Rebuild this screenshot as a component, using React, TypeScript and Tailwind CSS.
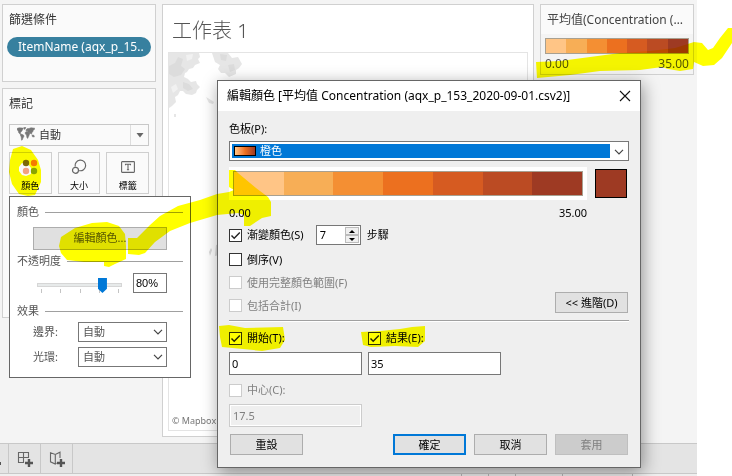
import type { ReactNode } from "react";

const STEPS = [
  "bg-[#ffc586]",
  "bg-[#f7ae56]",
  "bg-[#f48f33]",
  "bg-[#ec701f]",
  "bg-[#d65b21]",
  "bg-[#bb4b23]",
  "bg-[#9e3a23]",
];

function Ramp({ className }: { className: string }) {
  return (
    <div className={`flex border border-[#a8a090] ${className}`}>
      {STEPS.map((s) => (
        <div key={s} className={`flex-1 ${s}`} />
      ))}
    </div>
  );
}

function Chevron({ className }: { className: string }) {
  return (
    <svg viewBox="0 0 10 6" className={`pointer-events-none absolute h-[6px] w-[10px] ${className}`} fill="none" stroke="#444" strokeWidth="1.2">
      <path d="M1 0.8 5 4.8 9 0.8" />
    </svg>
  );
}

function WorldIcon() {
  return (
    <svg viewBox="0 0 18 14" className="pointer-events-none absolute left-2 top-[3px] h-[14px] w-[18px]" fill="#777" stroke="#777" strokeWidth="0.5">
      <path d="M0 1.5 2 .8 5.8 1 6.3 2 5.2 3 5 4 3.8 5 3.2 6.2 4.2 7 6.5 8 7 9.2 6 11 5.2 13 4.5 13.2 4.2 10 3.3 8 3.3 7.2 1.8 6 1.3 4 .2 3z" />
      <path d="M6.7.5 8.8.2 8.2 2 7.3 2.4zM9 3.8 9 2.8 10.4 1.6 12 1.5 14 .7 17.8 1.2 17.4 2.6 16.2 3.2 15.8 4.8 14.8 5.8 14.5 7.3 13.6 6 13 7 12.2 5.8 11.7 5.4 12.6 7 11.6 9.6 10.6 11.5 9.8 10.3 9.5 8 8.3 7 8.3 5.2 9.5 4.6 11 4.8 10.3 3.8z" />
      <path d="M15 8 17 8.3 17.3 10 15.4 9.8z" />
    </svg>
  );
}

function MarkButton({ icon, label }: { icon: ReactNode; label: string }) {
  return (
    <button className="flex h-[42px] flex-1 flex-col items-center border border-[#cfcfcf] bg-[#fafafa] pt-[5px] text-[9px] leading-3 text-black">
      <span className="flex h-[18px] items-center">{icon}</span>
      <span className="mt-1">{label}</span>
    </button>
  );
}

function Sidebar() {
  return (
    <aside className="flex w-[154px] shrink-0 flex-col gap-[6px] text-[#333]">
      <section className="h-[78px] border border-[#d0d0d0] bg-[#fafafa] px-1 pt-[7px]">
        <h2 className="px-[2px] text-[12px] leading-4">篩選條件</h2>
        <button className="mt-[9px] h-5 w-full truncate rounded-full bg-[#37809f] pl-[11px] text-left text-[12px] leading-5 text-white">
          ItemName (aqx_p_15..
        </button>
      </section>
      <section className="h-[230px] border border-[#d0d0d0] bg-[#fafafa] px-[6px] pt-[7px]">
        <h2 className="text-[12px] leading-4">標記</h2>
        <div className="relative mt-3">
          <select aria-label="標記類型" className="block h-[22px] w-full appearance-none border border-[#c8c8c8] bg-[#fafafa] pl-[29px] text-[11px]">
            <option>自動</option>
          </select>
          <WorldIcon />
          <div className="pointer-events-none absolute inset-y-px right-[18px] w-px bg-[#ddd]" />
          <svg viewBox="0 0 8 5" className="pointer-events-none absolute right-[5px] top-[9px] h-[5px] w-[8px]" fill="#666">
            <path d="M0.5 0h7L4 4.5z" />
          </svg>
        </div>
        <div className="mt-[6px] flex gap-[6px]">
          <MarkButton
            label="顏色"
            icon={
              <svg viewBox="0 0 16 16" className="size-4">
                <circle cx="4" cy="4" r="3.2" fill="#7d6a10" />
                <circle cx="12" cy="4" r="3.2" fill="#f57a0a" />
                <circle cx="4" cy="12" r="3.2" fill="#f2a181" />
                <circle cx="12" cy="12" r="3.2" fill="#8aa51e" />
              </svg>
            }
          />
          <MarkButton
            label="大小"
            icon={
              <svg viewBox="0 0 16 16" className="size-4" fill="none" stroke="#666" strokeWidth="1.2">
                <path d="M4.2 7.6A5.3 5.3 0 1 1 8.2 11.6" />
                <circle cx="4.5" cy="11.3" r="3" />
              </svg>
            }
          />
          <MarkButton
            label="標籤"
            icon={
              <svg viewBox="0 0 14 12" className="h-3 w-[14px]" fill="none" stroke="#666" strokeWidth="1.1">
                <rect x=".6" y=".6" width="12.8" height="10.8" rx=".6" />
                <path d="M4.5 4.2V3.2h5v1M7 3.2v5.6M5.9 8.8h2.2" />
              </svg>
            }
          />
        </div>
      </section>
    </aside>
  );
}

function Worksheet() {
  return (
    <section className="flex min-w-0 flex-1 flex-col border border-[#d0d0d0] bg-white p-[5px] pt-[10px]">
      <h1 className="pl-1 text-[20px] font-light leading-8 text-[#555]">工作表 1</h1>
      <div className="mt-[5px] flex flex-1 flex-col justify-between border border-[#e4e4e4]">
        <svg viewBox="0 0 90 210" className="h-[210px] w-[90px]" fill="#e6e6e6">
          <path d="M0 0H30L31 4 29 6 31 10 26 12 24 15 20 16 18 19 16 20 15 24 19 26 22 29 27 28 28 31 31 34 28 37 27 40 23 42 17 41 14 38 11 38 9 42 6 44 7 49 3 53 0 55z" />
          <path d="M43 0H59L63 5 69 4 73 11 70 15 67 17 67 21 60 24 56 20 52 20 49 16 51 12 46 9zM37 44 42 47 45 49 44 51 40 50z" />
          <path d="M5 61h2v3H5z" />
          <path fill="#dcdcdc" d="M0 13 6 10 9 4 14 6 12 13 16 16 12 22 5 24 0 21zM14 29 20 31 24 36 19 38 14 35zM51 1 58 2 57 8 52 7zM59 12 65 11 66 17 61 19z" />
          <path fill="#f1f1f1" d="M17 2 24 1 23 6 18 8zM2 34 7 31 9 36 4 40z" />
          <path fill="#dadada" d="M40 199l2-4 1 2-2 6zM47 192l3-1v4l-2 2 2 5-4 1z" />
        </svg>
        <p className="pb-[3px] pl-[3px] text-[9px] leading-3 text-[#777]">© Mapbox © OSM</p>
      </div>
    </section>
  );
}

function Legend() {
  return (
    <section className="h-[71px] w-[154px] shrink-0 border border-[#d0d0d0] bg-[#f4f4f4] text-[#555]">
      <h2 className="truncate bg-[#fafafa] py-[6px] pl-[6px] pr-1 text-[12px] leading-[17px] text-[#444]">平均值(Concentration (…</h2>
      <Ramp className="mx-1 mt-1 h-4" />
      <div className="mx-1 flex justify-between text-[12px] leading-5">
        <span>0.00</span>
        <span>35.00</span>
      </div>
    </section>
  );
}

function Footer() {
  return (
    <footer className="h-[33px] border-t border-[#c8c8c8] bg-[#e4e4e4]">
      <div className="flex h-[30px] border-b border-[#c8c8c8]">
        <button aria-label="新工作表" className="relative w-[9px] border-r border-[#c8c8c8]">
          <span className="absolute left-0 top-[18px] h-[3px] w-px bg-[#555]" />
        </button>
        <button aria-label="新儀表板" className="flex w-8 items-center justify-center border-r border-[#c8c8c8]">
          <svg viewBox="0 0 16 16" className="size-4" fill="none" stroke="#666" strokeWidth="1.1">
            <path d="M7 11.5H1.5v-10h10V7M6.5 1.5v10M1.5 6.5h10" />
            <path d="M12 8v8M8 12h8" stroke="#555" strokeWidth="2.4" />
          </svg>
        </button>
        <button aria-label="新故事" className="flex w-8 items-center justify-center border-r border-[#c8c8c8]">
          <svg viewBox="0 0 16 16" className="size-4" fill="none" stroke="#666" strokeWidth="1.1">
            <path d="M7.5 12 6.3 13 1.5 10.8v-9L6.3 3.5 11 1.2V7M6.3 3.5V13" />
            <path d="M12 8v8M8 12h8" stroke="#555" strokeWidth="2.4" />
          </svg>
        </button>
      </div>
      <div className="flex h-[2px] justify-end bg-[#efefef] pr-16">
        <span className="w-[27px] border-l border-[#b8b8b8]" />
        <span className="w-[27px] border-l border-[#b8b8b8]" />
        <span className="w-[47px] border-l border-[#b8b8b8]" />
        <span className="w-[71px] border-x border-[#b8b8b8]" />
      </div>
    </footer>
  );
}

function GroupTitle({ children }: { children: string }) {
  return (
    <div className="flex items-center gap-[6px] leading-4">
      <span>{children}</span>
      <span className="h-px flex-1 bg-[#a0a0a0]" />
    </div>
  );
}

function EffectSelect({ id, label }: { id: string; label: string }) {
  return (
    <div className="flex items-center px-4">
      <label htmlFor={id} className="w-[45px]">{label}</label>
      <div className="relative flex-1">
        <select id={id} className="block h-5 w-full appearance-none border border-[#777] bg-white pl-1 text-[11px]">
          <option>自動</option>
        </select>
        <Chevron className="right-1 top-[7px]" />
      </div>
    </div>
  );
}

function ColorPopup() {
  return (
    <div className="absolute left-[9px] top-[196px] h-[182px] w-[182px] border border-[#666] bg-white px-[7px] pt-[7px] text-[11px] text-[#555]">
      <GroupTitle>顏色</GroupTitle>
      <div className="mt-[7px] px-4">
        <button className="block h-[23px] w-full border border-[#adadad] bg-[#e0e0e0]">編輯顏色...</button>
      </div>
      <div className="mt-[3px]">
        <GroupTitle>不透明度</GroupTitle>
      </div>
      <div className="mt-1 flex h-5 items-start pl-5 pr-4">
        <div className="w-[86px] pt-1">
          <input
            type="range"
            aria-label="不透明度"
            defaultValue={81}
            className="block h-4 w-[85px] appearance-none bg-transparent [&::-webkit-slider-runnable-track]:h-1 [&::-webkit-slider-runnable-track]:border [&::-webkit-slider-runnable-track]:border-[#d6d6d6] [&::-webkit-slider-runnable-track]:bg-[#e7eaea] [&::-webkit-slider-thumb]:-mt-[6px] [&::-webkit-slider-thumb]:h-[15px] [&::-webkit-slider-thumb]:w-[9px] [&::-webkit-slider-thumb]:appearance-none [&::-webkit-slider-thumb]:bg-[#0078d7] [&::-webkit-slider-thumb]:[clip-path:polygon(0_0,100%_0,100%_72%,50%_100%,0_72%)]"
          />
          <div className="-mt-1 flex justify-between px-1">
            {[0, 25, 50, 75, 100].map((t) => (
              <span key={t} className="h-1 w-px bg-[#c4c4c4]" />
            ))}
          </div>
        </div>
        <input aria-label="不透明度百分比" defaultValue="80%" className="ml-auto h-5 w-[34px] border border-[#777] pl-[2px] font-['Liberation_Sans',sans-serif] text-[11px] text-black" />
      </div>
      <div className="mt-[10px]">
        <GroupTitle>效果</GroupTitle>
      </div>
      <div className="mt-[3px] flex flex-col gap-[5px]">
        <EffectSelect id="border" label="邊界:" />
        <EffectSelect id="halo" label="光環:" />
      </div>
    </div>
  );
}

function Check({ label, checked = false, disabled = false }: { label: string; checked?: boolean; disabled?: boolean }) {
  return (
    <label className={`flex items-center gap-[5px] ${disabled ? "text-[#808080]" : "text-black"}`}>
      <span className="relative block size-[13px]">
        <input
          type="checkbox"
          defaultChecked={checked}
          disabled={disabled}
          className="peer block size-[13px] appearance-none border border-[#333] bg-white disabled:border-[#ccc]"
        />
        <svg viewBox="0 0 13 13" className="pointer-events-none absolute inset-0 hidden size-[13px] peer-checked:block" fill="none" stroke="#222" strokeWidth="1.4">
          <path d="M2.5 6.5 5.2 9.3 10.8 3.4" />
        </svg>
      </span>
      {label}
    </label>
  );
}

const BUTTON = "h-[21px] w-[73px] border border-[#adadad] bg-[#e1e1e1]";

function ColorDialog() {
  return (
    <div role="dialog" aria-labelledby="dialog-title" className="absolute left-[217px] top-20 w-[424px] border border-[#666] bg-[#efefef] text-[11px] leading-4 text-black shadow-[2px_4px_16px_rgba(0,0,0,0.4)]">
      <header className="flex h-[30px] items-center justify-between bg-white pl-[9px] pr-[9px]">
        <h2 id="dialog-title" className="whitespace-nowrap text-[12px]">編輯顏色 [平均值 Concentration (aqx_p_153_2020-09-01.csv2)]</h2>
        <button aria-label="關閉">
          <svg viewBox="0 0 12 12" className="size-3" stroke="#111" strokeWidth="1.1">
            <path d="M1 1 11 11M11 1 1 11" />
          </svg>
        </button>
      </header>
      <div className="px-[11px] pb-3 pt-[10px]">
        <label htmlFor="palette" className="block">色板(P):</label>
        <div className="relative mt-1 h-5 border border-[#777] bg-white py-[2px] pl-[2px] pr-[18px]">
          <select id="palette" className="block h-[14px] w-full appearance-none bg-[#0078d7] pl-7 text-[11px] leading-[14px] text-white">
            <option>橙色</option>
          </select>
          <span className="pointer-events-none absolute left-1 top-1 h-[10px] w-[22px] border border-black bg-linear-to-r from-[#ffc586] via-[#ec701f] to-[#9e3a23]" />
          <Chevron className="right-1 top-[7px]" />
        </div>
        <div className="mt-[6px] flex items-center justify-between">
          <div className="w-[358px] bg-white p-1">
            <Ramp className="h-[25px] w-[350px]" />
          </div>
          <button aria-label="目標顏色" className="mr-[2px] h-[29px] w-8 border border-black bg-[#9e3a23]" />
        </div>
        <div className="mt-[5px] flex w-[358px] justify-between">
          <span>0.00</span>
          <span>35.00</span>
        </div>
        <div className="mt-1 flex h-5 items-center">
          <Check label="漸變顏色(S)" checked />
          <div className="ml-3 flex h-5 w-[45px] border border-[#777] bg-white p-px">
            <input aria-label="步驟" defaultValue="7" className="w-[27px] pl-[2px] text-[11px]" />
            <div className="flex flex-1 flex-col">
              <button aria-label="增加" className="flex flex-1 items-center justify-center border border-[#bbb] bg-[#efefef]">
                <svg viewBox="0 0 6 3" className="h-[3px] w-[6px]"><path d="M0 3 3 0 6 3z" /></svg>
              </button>
              <button aria-label="減少" className="flex flex-1 items-center justify-center border border-[#bbb] bg-[#efefef]">
                <svg viewBox="0 0 6 3" className="h-[3px] w-[6px]"><path d="M0 0 3 3 6 0z" /></svg>
              </button>
            </div>
          </div>
          <span className="ml-[6px]">步驟</span>
        </div>
        <div className="mt-[3px] flex items-end justify-between">
          <div className="grid auto-rows-[23px]">
            <Check label="倒序(V)" />
            <Check label="使用完整顏色範圍(F)" disabled />
            <Check label="包括合計(I)" disabled />
          </div>
          <button className={`mr-px mb-1 ${BUTTON}`}>&lt;&lt; 進階(D)</button>
        </div>
        <div className="mt-[3px] h-[2px] border-b border-white bg-[#a0a0a0]" />
        <div className="mt-[6px] flex gap-[6px]">
          <div className="w-[133px]">
            <div className="flex h-5"><Check label="開始(T):" checked /></div>
            <input aria-label="開始" defaultValue="0" className="mt-1 block h-[23px] w-full border border-[#777] bg-white pl-[2px]" />
          </div>
          <div className="w-[133px]">
            <div className="flex h-5"><Check label="結果(E):" checked /></div>
            <input aria-label="結果" defaultValue="35" className="mt-1 block h-[23px] w-full border border-[#777] bg-white pl-[2px]" />
          </div>
        </div>
        <div className="mt-[5px] flex h-5"><Check label="中心(C):" disabled /></div>
        <input aria-label="中心" disabled defaultValue="17.5" className="mt-1 block h-[23px] w-[133px] border border-[#ccc] bg-[#efefef] pl-[3px] text-[#808080] shadow-[inset_0_0_0_1px_#fff]" />
        <div className="mt-[7px] flex gap-2 px-px">
          <button className={`mr-auto ${BUTTON}`}>重設</button>
          <button className="h-[21px] w-[73px] border-2 border-[#0078d7] bg-[#e1e1e1]">確定</button>
          <button className={BUTTON}>取消</button>
          <button disabled className="h-[21px] w-[73px] border border-[#bfbfbf] bg-[#ccc] text-[#808080]">套用</button>
        </div>
      </div>
    </div>
  );
}

function HighlighterMarks() {
  return (
    <svg viewBox="0 0 732 476" className="pointer-events-none absolute left-0 top-0 h-[476px] w-[732px] mix-blend-multiply" fill="#ffff00">
      <path fillRule="evenodd" d="M10 160 13 149 22 146 31 150 38 160 41 170 41 182 35 195 28 196 19 194 12 184 9 172zM22 163 19 167 19 171 22 175 26 176 31 174 31 168 28 164z" />
      <path d="M59 246 61 237 75 228 92 223 107 222 119 226 125 234 126 246 126 259 115 264 109 267 104 266 104 262 84 262 67 260 61 253z" />
      <path d="M128 238 137 238 150 225 160 216 178 206 200 200 217 194 229 192 234 190 229 187 229 170 235 170 238 173 256 188 268 197 271 202 271 216 262 218 250 226 244 226 244 215 238 213 217 215 190 223 170 231 155 242 145 253 139 255 128 254z" />
      <path d="M536 62 560 61 590 57 620 53 650 51 675 48 694 42 702 43 708 50 713 48 720 38 728 28H732V43L722 58 714 65 703 66 694 62 693 69 680 71 668 69 662 67 640 70 600 71 570 75 537 78z" />
      <path d="M219 326 229 325 245 328 283 327 285 340 280 348 262 351 243 349 222 347 220 337z" />
      <path d="M361 332 380 331 400 329 412 327 425 326 425 341 418 347 395 346 371 347 363 345z" />
    </svg>
  );
}

export default function App() {
  return (
    <div className="relative min-h-screen overflow-hidden bg-white pr-[35px] font-['Noto_Sans','Noto_Sans_CJK_TC',sans-serif]">
      <div className="flex min-h-screen flex-col bg-[#f4f4f4]">
        <main className="flex flex-1 gap-[6px] pb-[6px] pl-[2px] pr-[3px] pt-1">
          <Sidebar />
          <Worksheet />
          <Legend />
        </main>
        <Footer />
      </div>
      <ColorPopup />
      <ColorDialog />
      <HighlighterMarks />
    </div>
  );
}
